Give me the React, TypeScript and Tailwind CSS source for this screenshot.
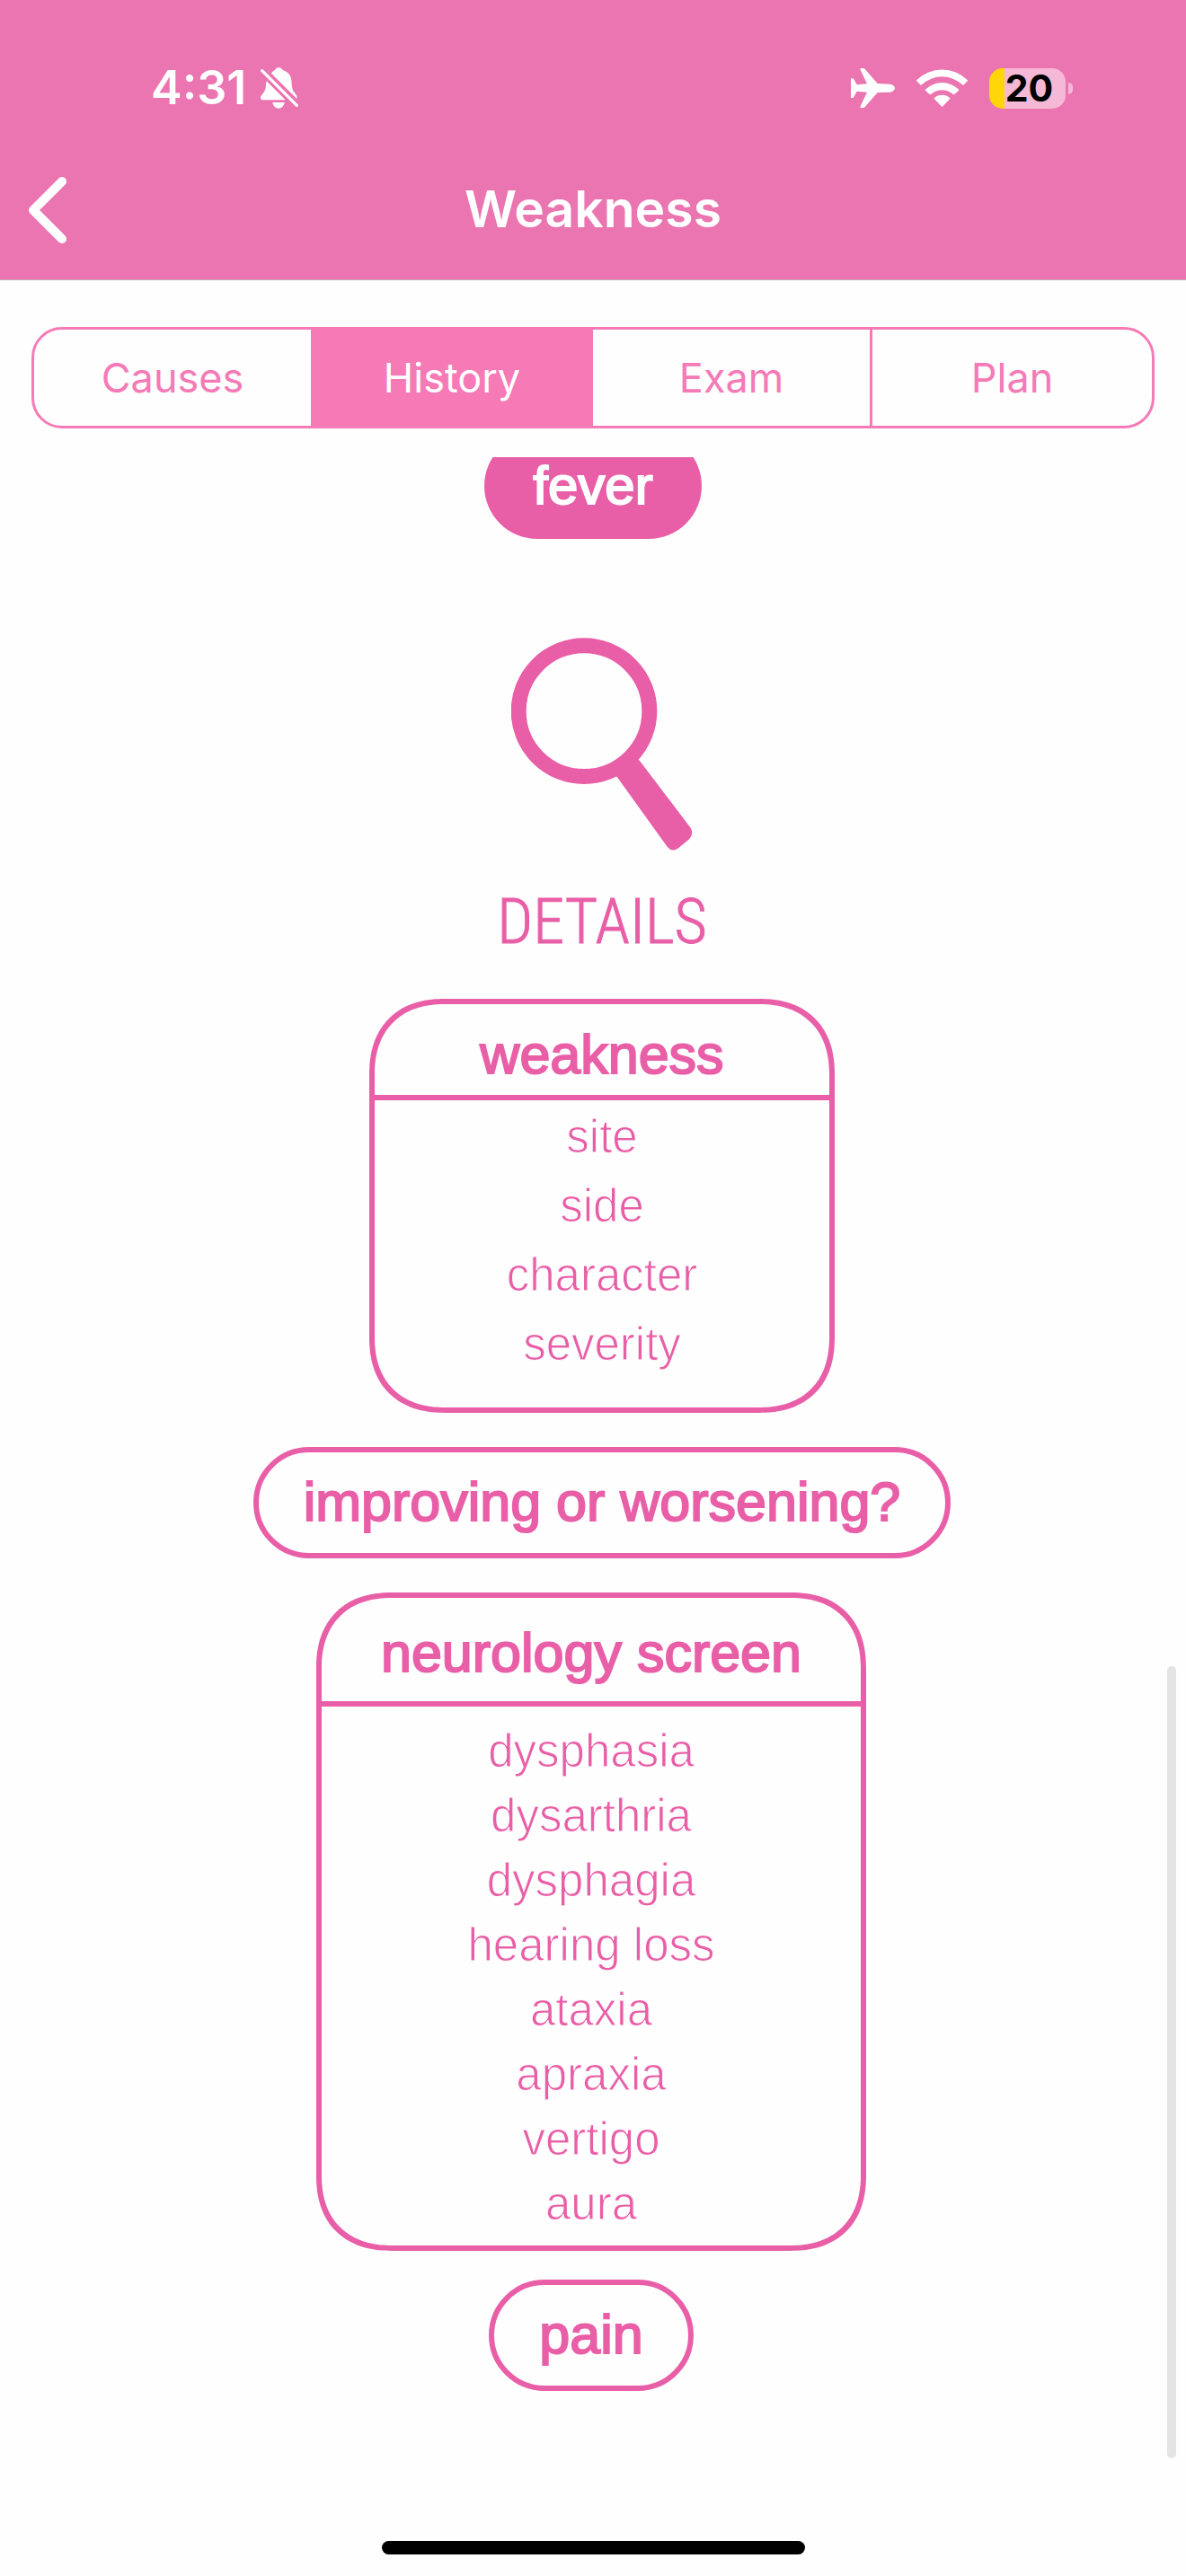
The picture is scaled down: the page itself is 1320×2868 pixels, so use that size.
import React from "react";

const tabs = ["Causes", "History", "Exam", "Plan"];
const weakness = ["site", "side", "character", "severity"];
const neurology = [
  "dysphasia",
  "dysarthria",
  "dysphagia",
  "hearing loss",
  "ataxia",
  "apraxia",
  "vertigo",
  "aura",
];

function BellOffIcon() {
  return (
    <svg viewBox="0 0 126 138" className="h-[46px] w-[42px]" fill="currentColor" aria-hidden="true">
      <path d="M36 20C40 14 44 10 48 9C51 3 55 1 60 1C66 1 71 3 74 9C90 14 101 26 103 42C105 60 104 74 113 84C120 91 123 96 121 105Z" />
      <path d="M20 46L83 109H9C3 109 0 106 0 101C0 91 14 86 17 68C19 60 18 52 20 46Z" />
      <path d="M40 117H80C78 129 71 137 60 137C49 137 42 129 40 117Z" />
      <path d="M5 11L121 127" stroke="currentColor" strokeWidth="10" strokeLinecap="round" />
    </svg>
  );
}

function PlaneIcon() {
  return (
    <svg viewBox="0 0 147 132" className="h-[44px] w-[49px]" fill="currentColor" aria-hidden="true">
      <path d="M130 53C140 54 147 61 147 66C147 72 140 79 130 80L89 81L47 129C45 132 43 132 40 132H34C31 132 31 130 32 127L54 80L20 77L10 95C8 98 6 99 3 99H0V34H3C7 34 9 35 11 38L20 55L54 52L32 5C31 2 31 0 34 0H40C43 0 45 0 47 3L89 51Z" />
    </svg>
  );
}

function WifiIcon() {
  return (
    <svg viewBox="0 0 171 126" className="h-[42px] w-[57px]" fill="currentColor" aria-hidden="true">
      <path d="M1 36A120 120 0 0 1 170 36Q172 38 170 40L157 53Q155 54 153 52A98 98 0 0 0 18 52Q16 54 14 53L1 40Q-1 38 1 36Z" />
      <path d="M31 67A79 79 0 0 1 140 67Q143 69 141 71L127 84Q125 86 123 84A56 56 0 0 0 48 84Q46 86 44 84L30 71Q28 69 31 67Z" />
      <path d="M60 96A38 38 0 0 1 111 96Q113 98 111 100L88 124Q85 127 83 124L60 100Q58 98 60 96Z" />
    </svg>
  );
}

function MagnifierIcon() {
  return (
    <svg viewBox="0 0 606 714" className="h-[238px] w-[202px]" aria-hidden="true">
      <circle cx="243" cy="245" r="218.5" fill="none" stroke="currentColor" strokeWidth="51" />
      <path
        d="M340 448L426 407L598 634Q611 654 594 673L558 703Q538 718 522 700L351 462Z"
        fill="currentColor"
      />
    </svg>
  );
}

function Pill({ children }: { children: React.ReactNode }) {
  return (
    <div className="flex h-[124px] items-center rounded-full border-6 border-[#e95fa7] px-[50px] pb-0.5 text-[61px] leading-none [-webkit-text-stroke:2px_#e95fa7]">
      {children}
    </div>
  );
}

function BatteryIndicator() {
  return (
    <div className="flex items-center gap-[3px]">
      <div className="flex h-[45px] w-[85px] items-center justify-center rounded-[15px] bg-linear-to-r from-[#ffd60a] from-20% to-[#f5b9d7] to-20% pl-1 text-[41px] leading-none font-bold text-black">
        20
      </div>
      <div className="h-[13px] w-[5px] rounded-r-full bg-[#f5b9d7]" />
    </div>
  );
}

export default function App() {
  return (
    <div className="flex min-h-screen flex-col bg-[#fefefe] font-['Liberation_Sans',sans-serif] text-[#e95fa7]">
      <header className="border-b border-[#c9a3b5] bg-[#eb75b0] font-[Inter,sans-serif] text-white">
        <div className="flex h-[156px] items-center justify-between pt-10 pr-[126px] pl-[168px]">
          <div className="flex items-center gap-4">
            <span className="text-[52px] leading-none font-semibold">4:31</span>
            <BellOffIcon />
          </div>
          <div className="flex items-center gap-6">
            <PlaneIcon />
            <WifiIcon />
            <BatteryIndicator />
          </div>
        </div>
        <div className="grid h-[155px] grid-cols-[1fr_auto_1fr] items-center">
          <button type="button" aria-label="Back" className="ml-[30px] w-fit">
            <svg viewBox="0 0 45 76" className="h-[76px] w-[45px]" aria-hidden="true">
              <path d="M39 6L7 38L39 70" fill="none" stroke="currentColor" strokeWidth="10" strokeLinecap="round" strokeLinejoin="round" />
            </svg>
          </button>
          <h1 className="pb-0.5 text-[57px] leading-none font-semibold">Weakness</h1>
        </div>
      </header>

      <nav className="mx-[35px] mt-[52px] grid h-[113px] grid-cols-4 divide-x-3 divide-[#f57ab6] overflow-hidden rounded-[34px] border-3 border-[#f57ab6] font-[Inter,sans-serif] text-[45px] text-[#f57ab6]">
        {tabs.map((tab) => (
          <button
            key={tab}
            type="button"
            aria-pressed={tab === "History"}
            className="aria-pressed:bg-[#f57ab6] aria-pressed:text-white"
          >
            {tab}
          </button>
        ))}
      </nav>

      <main className="relative mt-8 flex grow flex-col items-center overflow-hidden">
        <div className="-mt-[27px] flex h-[118px] items-center rounded-full bg-[#e95fa7] px-[54px] text-[60px] leading-none text-white [-webkit-text-stroke:2px_white]">
          fever
        </div>

        <section className="mt-[110px] flex flex-col items-center pl-5">
          <MagnifierIcon />
          <h2 className="mt-[30px] mb-[38px] font-['Roboto_Condensed','Liberation_Sans_Narrow','Open_Sans',sans-serif] text-[70px] leading-[96px] font-light [-webkit-text-stroke:1px_#e95fa7]">
            DETAILS
          </h2>
          <div className="w-[518px] rounded-[84px] border-6 border-[#e95fa7] text-center [corner-shape:superellipse(1.2)]">
            <h3 className="flex h-[107px] items-center justify-center border-b-6 border-[#e95fa7] pt-3 text-[61px] leading-none [-webkit-text-stroke:2px_#e95fa7]">
              weakness
            </h3>
            <ul className="pt-0.5 pb-8 text-[51px] leading-[77px] [-webkit-text-stroke:1px_#fefefe]">
              {weakness.map((item) => (
                <li key={item}>{item}</li>
              ))}
            </ul>
          </div>
          <div className="mt-[38px]">
            <Pill>improving or worsening?</Pill>
          </div>
        </section>

        <section className="mt-[38px] flex flex-col items-center pr-1">
          <div className="w-[612px] rounded-[84px] border-6 border-[#e95fa7] text-center [corner-shape:superellipse(1.2)]">
            <h3 className="flex h-[121px] items-center justify-center border-b-6 border-[#e95fa7] pt-2 text-[61px] leading-none [-webkit-text-stroke:2px_#e95fa7]">
              neurology screen
            </h3>
            <ul className="pt-3.5 pb-2.5 text-[51px] leading-[72px] [-webkit-text-stroke:1px_#fefefe]">
              {neurology.map((item) => (
                <li key={item}>{item}</li>
              ))}
            </ul>
          </div>
          <div className="mt-8">
            <Pill>pain</Pill>
          </div>
        </section>

        <div className="absolute top-[1346px] right-[11px] h-[882px] w-[10px] rounded-full bg-[#e4e4e4]" />
      </main>

      <footer className="flex justify-center pb-6">
        <div className="h-[15px] w-[471px] rounded-full bg-black" />
      </footer>
    </div>
  );
}
